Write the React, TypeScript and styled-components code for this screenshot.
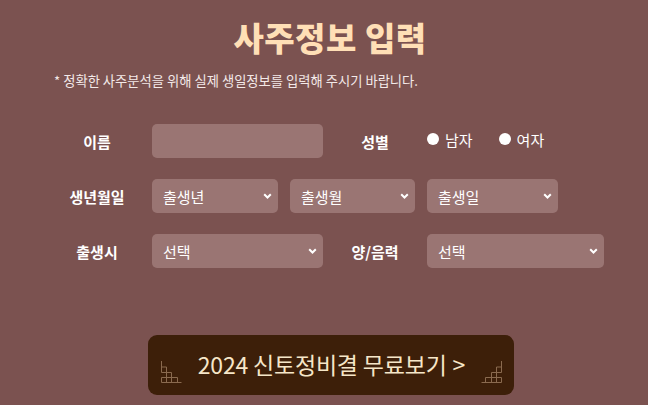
import React from "react";
import styled, { createGlobalStyle } from "styled-components";

const Global = createGlobalStyle`
  html, body { margin: 0; padding: 0; background: #7b5250; }
  body { font-family: "Noto Sans CJK KR", "Noto Sans", sans-serif; }
  * { box-sizing: border-box; }
`;

const Page = styled.div`
  width: 648px;
  height: 405px;
  background: #7b5250;
  padding-top: 15px;
  overflow: hidden;
`;

const Title = styled.h1`
  margin: 0 0 0 12px;
  text-align: center;
  font-size: 33px;
  line-height: 44px;
  font-weight: 800;
  color: #ffdfb6;
  letter-spacing: 0.5px;
`;

const Notice = styled.p`
  margin: 13px 0 0 54px;
  font-size: 13.3px;
  line-height: 18px;
  color: #f3e9e8;
`;

const Form = styled.div`
  margin-top: 34px;
  display: flex;
  flex-direction: column;
  gap: 21px;
`;

const Row = styled.div`
  display: flex;
  align-items: center;
  height: 34px;
`;

const Label = styled.div<{ $w: number }>`
  width: ${(p) => p.$w}px;
  text-align: center;
  font-size: 15px;
  font-weight: 700;
  color: #ffffff;
`;

const FirstLabel = styled(Label)`
  margin-left: 52px;
  margin-right: 10px;
`;

const TextInput = styled.input`
  width: 171px;
  height: 34px;
  border: none;
  border-radius: 5px;
  background: #9a7573;
  outline: none;
  padding: 0 11px;
  font-family: inherit;
  color: #fff;
`;

const SelectGroup = styled.div`
  display: flex;
  gap: 12px;
`;

const SelectWrap = styled.div<{ $w: number }>`
  position: relative;
  width: ${(p) => p.$w}px;
  height: 34px;
`;

const Select = styled.select`
  appearance: none;
  -webkit-appearance: none;
  width: 100%;
  height: 100%;
  border: none;
  border-radius: 5px;
  background: #9a7573;
  color: #ffffff;
  font-family: "Noto Sans CJK KR", sans-serif;
  font-size: 15px;
  padding: 0 11px;
  outline: none;
`;

const Chevron = styled.svg`
  position: absolute;
  right: 6px;
  top: 14px;
  width: 9px;
  height: 6px;
  pointer-events: none;
`;

const Radios = styled.div`
  display: flex;
  align-items: center;
  gap: 26px;
`;

const RadioLabel = styled.label`
  display: flex;
  align-items: center;
  gap: 6px;
  font-size: 15px;
  color: #ffffff;
  margin-top: -4px;
`;

const Radio = styled.input`
  appearance: none;
  -webkit-appearance: none;
  margin: 0;
  width: 12px;
  height: 12px;
  border-radius: 50%;
  background: #ffffff;
  border: none;
`;

const ButtonRow = styled.div`
  margin-top: 67px;
  padding-left: 148px;
`;

const CtaButton = styled.button`
  width: 366px;
  height: 60px;
  border: none;
  border-radius: 9px;
  background: #3d1f09;
  color: #f6e6c8;
  font-family: "Noto Sans CJK KR", sans-serif;
  font-size: 23px;
  font-weight: 400;
  display: flex;
  align-items: center;
  justify-content: space-between;
  padding: 0 12px 0 13px;
  letter-spacing: -0.2px;
`;

const Deco = styled.svg<{ $flip?: boolean }>`
  width: 21px;
  height: 22px;
  margin-top: 14px;
  flex-shrink: 0;
  transform: ${(p) => (p.$flip ? "scaleX(-1)" : "none")};
`;

const CtaText = styled.span`
  margin-bottom: 2px;
`;

const Arrow = styled.span`
  margin-left: 6px;
`;

const ChevronIcon = () => (
  <Chevron viewBox="0 0 9 6">
    <path d="M1.2 1.2 L4.5 4.5 L7.8 1.2" stroke="#fff" strokeWidth="2" fill="none" />
  </Chevron>
);

const DecoIcon = ({ flip }: { flip?: boolean }) => (
  <Deco $flip={flip} viewBox="0 0 21 22">
    <path
      d="M0.5 0 V11.5 H5.5 M0.5 6 H5.5 V21.5 M5.5 11.5 H10.5 V21.5 M0.5 16.5 V21.5 H20.5 M0.5 16.5 H16.5 V21.5"
      stroke="#8a6a4f"
      strokeWidth="1"
      fill="none"
    />
  </Deco>
);

const DropDown = ({ w, text }: { w: number; text: string }) => (
  <SelectWrap $w={w}>
    <Select defaultValue="">
      <option value="">{text}</option>
    </Select>
    <ChevronIcon />
  </SelectWrap>
);

export default function App() {
  return (
    <>
      <Global />
      <Page>
        <Title>사주정보 입력</Title>
        <Notice>* 정확한 사주분석을 위해 실제 생일정보를 입력해 주시기 바랍니다.</Notice>
        <Form>
          <Row>
            <FirstLabel $w={90}>이름</FirstLabel>
            <TextInput type="text" />
            <Label $w={104}>성별</Label>
            <Radios>
              <RadioLabel>
                <Radio type="radio" name="gender" />
                남자
              </RadioLabel>
              <RadioLabel>
                <Radio type="radio" name="gender" />
                여자
              </RadioLabel>
            </Radios>
          </Row>
          <Row>
            <FirstLabel $w={90}>생년월일</FirstLabel>
            <SelectGroup>
              <DropDown w={126} text="출생년" />
              <DropDown w={125} text="출생월" />
              <DropDown w={131} text="출생일" />
            </SelectGroup>
          </Row>
          <Row>
            <FirstLabel $w={90}>출생시</FirstLabel>
            <DropDown w={171} text="선택" />
            <Label $w={104}>양/음력</Label>
            <DropDown w={177} text="선택" />
          </Row>
        </Form>
        <ButtonRow>
          <CtaButton>
            <DecoIcon />
            <CtaText>
              2024 신토정비결 무료보기<Arrow>&gt;</Arrow>
            </CtaText>
            <DecoIcon flip />
          </CtaButton>
        </ButtonRow>
      </Page>
    </>
  );
}
